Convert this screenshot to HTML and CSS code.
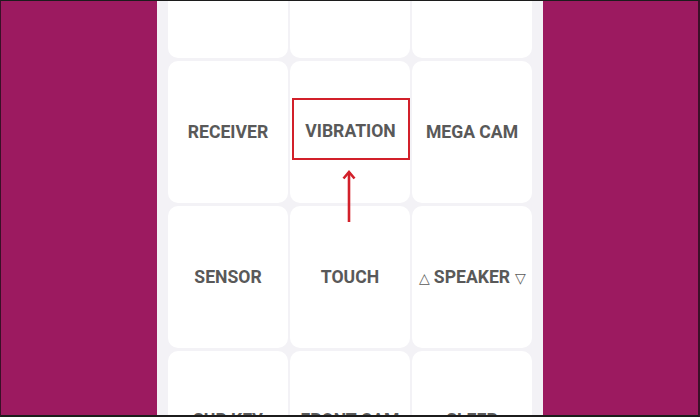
FILE: index.html
```html
<!DOCTYPE html>
<html>
<head>
<meta charset="utf-8">
<link rel="stylesheet" href="styles.css">
</head>
<body>
<div class="frame">
  <div class="screen">
    <div class="grid">
      <div class="tile"></div>
      <div class="tile"></div>
      <div class="tile"></div>
      <div class="tile"><span>RECEIVER</span></div>
      <div class="tile"><span class="mark">VIBRATION</span></div>
      <div class="tile"><span>MEGA CAM</span></div>
      <div class="tile"><span>SENSOR</span></div>
      <div class="tile"><span>TOUCH</span></div>
      <div class="tile"><span class="spk"><i>&#9651;</i> SPEAKER <i>&#9661;</i></span></div>
      <div class="tile"><span class="low">SUB KEY</span></div>
      <div class="tile"><span class="low">FRONT CAM</span></div>
      <div class="tile"><span class="low">SLEEP</span></div>
    </div>
    <svg class="arrow" width="20" height="56" viewBox="0 0 20 56">
      <path d="M10 3 L10 53" stroke="#d2202a" stroke-width="2.6" fill="none"/>
      <path d="M4.5 9.5 L10 3 L15.5 9.5" stroke="#d2202a" stroke-width="2.6" fill="none" stroke-linejoin="miter"/>
    </svg>
  </div>
</div>
</body>
</html>
```
FILE: styles.css
```css
html, body {
  margin: 0;
  padding: 0;
  background: #9c1a60;
}
.frame {
  width: 700px;
  height: 417px;
  box-sizing: border-box;
  border-top: 1px solid #1c1c1c;
  border-left: 1px solid #3a1028;
  border-right: 2px solid #3a1028;
  border-bottom: 2px solid #1c1c1c;
  background: #9c1a60;
  overflow: hidden;
}
.screen {
  position: relative;
  width: 386px;
  height: 100%;
  margin-left: 156px;
  background: #f3f2f6;
  box-sizing: border-box;
  padding: 0 11px;
  overflow: hidden;
}
.grid {
  display: grid;
  grid-template-columns: repeat(3, 120px);
  grid-auto-rows: 142px;
  gap: 3px 2px;
  margin-top: -85px;
}
.tile {
  background: #ffffff;
  border-radius: 10px;
  display: flex;
  align-items: center;
  justify-content: center;
  font-family: Roboto, "Liberation Sans", sans-serif;
  font-weight: 700;
  font-size: 17.6px;
  color: #595959;
}
.mark {
  box-sizing: border-box;
  width: 118px;
  height: 62px;
  border: 2px solid #d2202a;
  display: flex;
  align-items: center;
  justify-content: center;
  margin-left: 1px;
  margin-top: -7px;
  padding-top: 4px;
}
.low {
  margin-top: -4px;
}
.spk i {
  font-style: normal;
  font-weight: 400;
  font-size: 14px;
}
.arrow {
  position: absolute;
  left: 182px;
  top: 168px;
}
```
